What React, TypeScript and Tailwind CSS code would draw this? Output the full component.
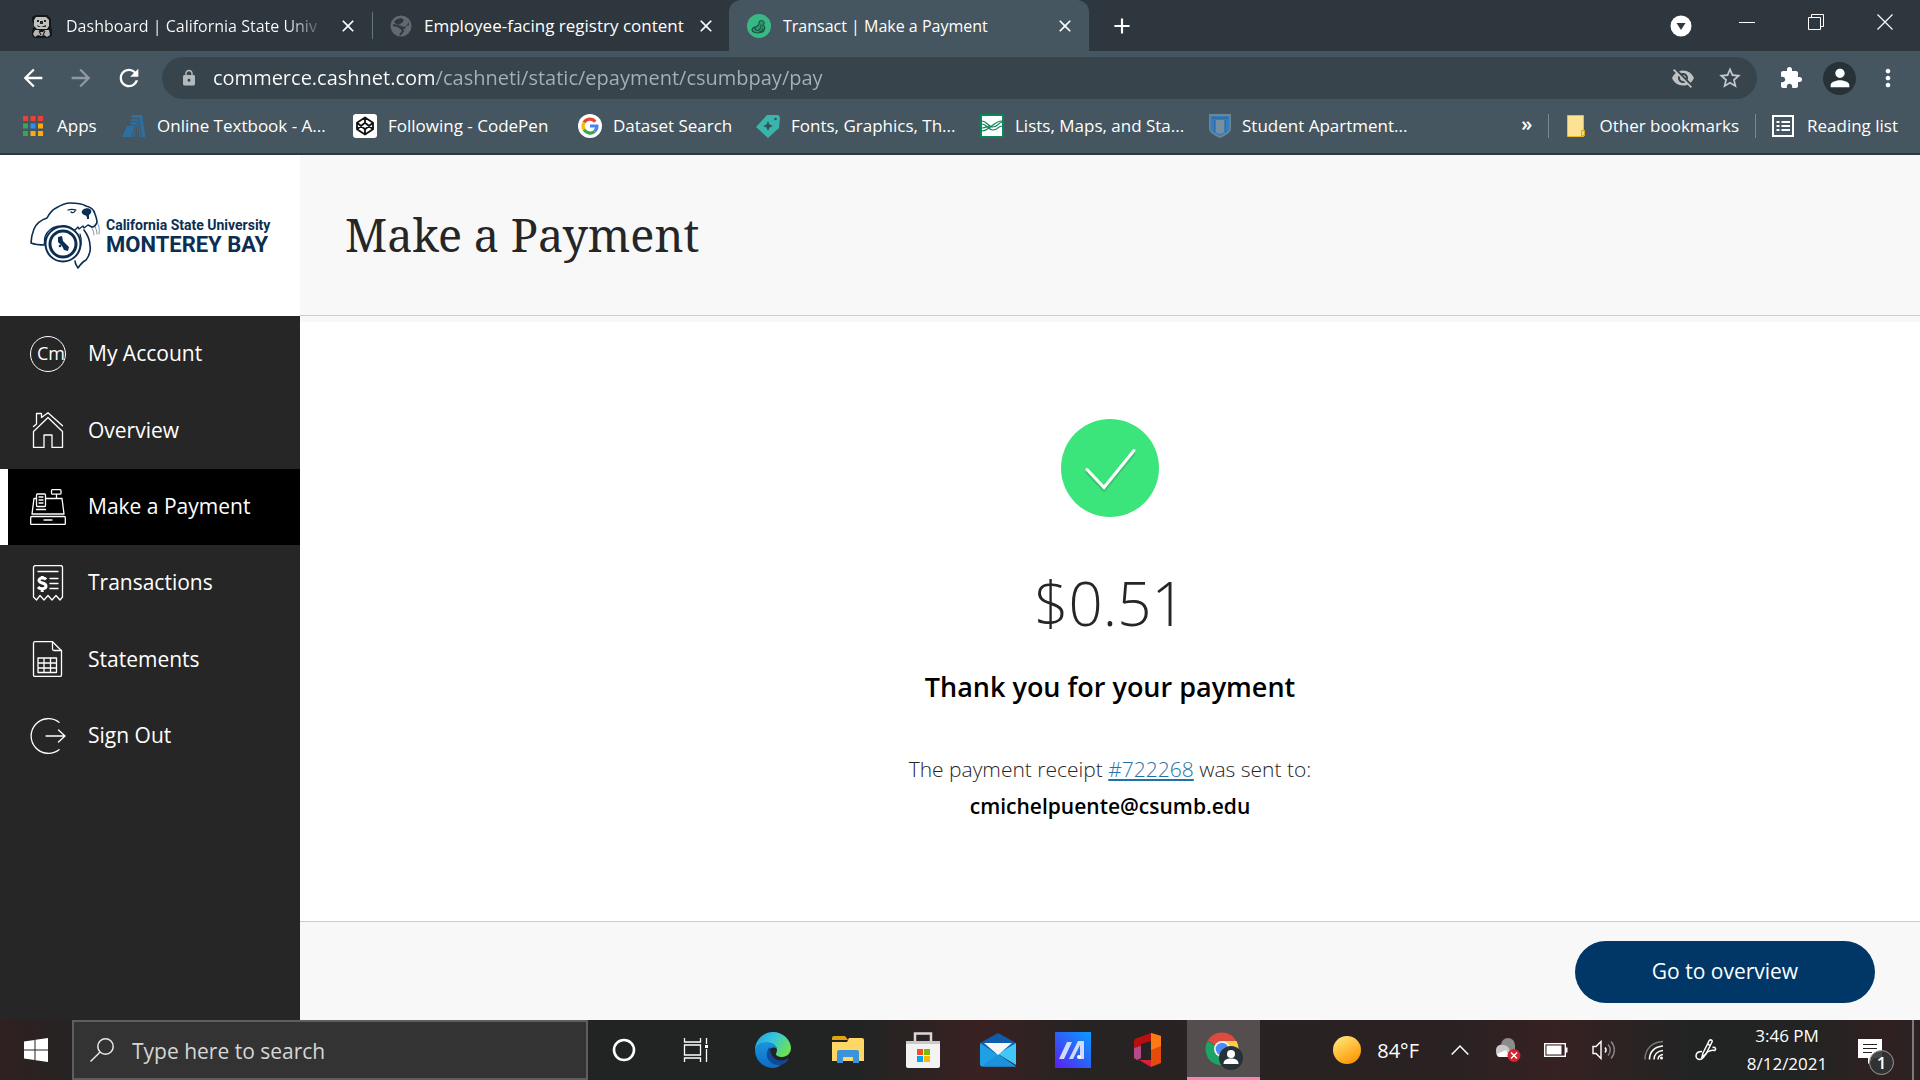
import React from "react";
import type { ReactNode } from "react";
import {
  MdArrowBack,
  MdArrowForward,
  MdRefresh,
  MdLock,
  MdVisibilityOff,
  MdStarBorder,
  MdExtension,
  MdPerson,
  MdMoreVert,
  MdClose,
  MdAdd,
} from "react-icons/md";

/* ---------- Browser icons ---------- */

const OtterFavicon = () => (
  <svg viewBox="0 0 22 24" className="h-6 w-[22px]" aria-hidden="true">
    <path d="M5 1h11l4 4v8l1 3v6l-4 2H3l-2-3v-5l2-3V10L1 7V3z" fill="#15181a" />
    <path d="M5 3h10l3 3v6l-2 3H6l-3-3V6z" fill="#c4c2bf" />
    <path d="M4 16h4l1 2h3l2-2h4l1 5-3 2-3-2-3 1-3-1-3 2-2-3z" fill="#b7b5b2" />
    <path d="M6 6h2v2H6zM13 6h2v2h-2zM9 7h3v3H9zM6 11l4 2 5-2v2H7z" fill="#22262a" />
    <path d="M8 17l2 4M14 17l-2 4" stroke="#22262a" strokeWidth="1.2" />
  </svg>
);

const GlobeFavicon = () => (
  <svg viewBox="0 0 22 22" className="size-[22px]" aria-hidden="true">
    <circle cx="11" cy="11" r="10.5" fill="#63696d" />
    <path d="M12 3c4 0 7 3 7 7l-3 1-1 3-4-1-1-3-4-1-2-2c2-3 5-4 8-4z" fill="#2d373d" />
    <path d="M11 3l3 2-2 3-3 1 2 2 3 1 3-2 2-4-3-3z" fill="#63696d" />
    <path d="M3 10l5 1 4 3 1 2-3 4" fill="none" stroke="#2d373d" strokeWidth="2" />
  </svg>
);

const TransactFavicon = () => (
  <svg viewBox="0 0 24 24" className="size-6" aria-hidden="true">
    <circle cx="12" cy="12" r="12" fill="#38b984" />
    <path
      d="M5 15.500c1-3 4-2 6-4s0-5 3-5 4 3 2 5c3 1 2 6-2 7-4 1-9 0-9-3z"
      fill="#2b9a70"
      stroke="#1d5546"
      strokeWidth="1.200"
    />
    <path d="M7 13.500c3 2 1 3 3 3s4-2 4-6M12 18c2 0 4-2 4-4" fill="none" stroke="#1d5546" strokeWidth="1.200" />
  </svg>
);

const AppsIcon = () => (
  <svg viewBox="0 0 20 20" className="size-5" aria-hidden="true">
    <path d="M0 0h5v5H0zM7.500 0h5v5h-5zM15 0h5v5h-5z" fill="#ea4335" />
    <path d="M0 7.500h5v5H0zM0 15h5v5H0z" fill="#34a853" />
    <path d="M7.500 7.500h5v5h-5z" fill="#2f8df5" />
    <path d="M15 7.500h5v5h-5zM7.500 15h5v5h-5zM15 15h5v5h-5z" fill="#fbab0c" />
  </svg>
);

const TextbookIcon = () => (
  <svg viewBox="0 0 24 24" className="size-6" aria-hidden="true">
    <path d="M10 1h10l3.500 22H0l5-11h3z" fill="#2f6f9d" />
    <path d="M8 4.500h9l2.500 18.500M5 11h8l.5 1L9.500 23M9 7.500h6.500L17 23" fill="none" stroke="#455660" strokeWidth="1.100" />
    <path d="M14.500 11l1.500 12h-4z" fill="#455660" />
  </svg>
);

const CodepenIcon = () => (
  <svg viewBox="0 0 24 24" className="size-6" aria-hidden="true">
    <rect width="24" height="24" rx="3" fill="#fff" />
    <path
      d="M12 3.500l8 5.200v6.600l-8 5.200-8-5.200V8.700zM12 3.500v5.300M12 20.500v-5.300M4 8.700l8 6.500 8-6.500M4 15.300l8-6.500 8 6.500"
      fill="none"
      stroke="#111"
      strokeWidth="1.800"
      strokeLinejoin="round"
    />
  </svg>
);

const GoogleIcon = () => (
  <svg viewBox="0 0 24 24" className="size-6" aria-hidden="true">
    <circle cx="12" cy="12" r="12" fill="#fff" />
    <g fill="none" strokeWidth="3.200">
      <path d="M17.300 7.600A7 7 0 0 0 6 8.500" stroke="#ea4335" />
      <path d="M6 8.500a7 7 0 0 0 0 7" stroke="#fbbc05" />
      <path d="M6 15.500a7 7 0 0 0 10.500 2" stroke="#34a853" />
      <path d="M16.500 17.500a7 7 0 0 0 2.400-5.500H12" stroke="#4285f4" />
    </g>
  </svg>
);

const TagIcon = () => (
  <svg viewBox="0 0 24 24" className="size-6" aria-hidden="true">
    <path d="M11 1l11 0 2 2-1 11-11 10L0 13z" fill="#3ab5ab" />
    <path d="M12 7l1.500 3.500L17 12l-3.500 1.500L12 17l-1.500-3.500L7 12l3.500-1.500z" fill="#34505a" />
    <circle cx="19.500" cy="5" r="1.300" fill="#34505a" />
  </svg>
);

const ListsIcon = () => (
  <svg viewBox="0 0 24 24" className="size-6" aria-hidden="true">
    <rect x="1" y="1" width="22" height="22" fill="#fff" stroke="#0b8457" strokeWidth="2" />
    <path
      d="M2 7c5 0 6 6 11 6s5-4 9-5M2 10c5 0 6 6 11 6s5-4 9-4M2 17c7 0 12-10 20-10M2 14c4 0 5-2 8-2"
      fill="none"
      stroke="#0b8457"
      strokeWidth="1.200"
    />
  </svg>
);

const ShieldIcon = () => (
  <svg viewBox="0 0 22 24" className="h-6 w-[22px]" aria-hidden="true">
    <path d="M0 0h22v14c0 5-5 7-11 10C5 21 0 19 0 14z" fill="#6f8592" />
    <path d="M1.500 2h19v12c0 4-4 5-9.500 8C5.500 19 1.500 18 1.500 14z" fill="#2f7fc7" />
    <path d="M6 6h10v12l-5 2-5-2z" fill="#7390a4" />
    <path d="M3 4h16M6 6v12M16 6v12" stroke="#3d5f7d" strokeWidth="1" />
  </svg>
);

const FolderBookmarkIcon = () => (
  <svg viewBox="0 0 18 22" className="h-[22px] w-[18px]" aria-hidden="true">
    <path d="M.5.500h16v14l1 1v5l-1 1H.5z" fill="#fde293" stroke="#e9bd2c" />
    <path d="M14.500 21v-5.500h3v4.500z" fill="#fbdb74" stroke="#d9a916" />
  </svg>
);

const ReadingListIcon = () => (
  <svg viewBox="0 0 22 22" className="size-[22px]" aria-hidden="true">
    <rect x="1" y="1" width="20" height="20" fill="none" stroke="#fff" strokeWidth="2" />
    <path d="M4.500 7h3M4.500 11h3M4.500 15h3M9.500 7H18M9.500 11H18M9.500 15H18" stroke="#fff" strokeWidth="2" />
  </svg>
);

/* ---------- Site icons ---------- */

const OtterLogo = () => (
  <svg
    viewBox="0 0 72 70"
    className="h-[70px] w-[72px] shrink-0"
    aria-hidden="true"
    fill="none"
    stroke="#0b2e52"
    strokeLinecap="round"
    strokeLinejoin="round"
  >
    <path
      d="M16 44c-5 0-9 0-14-2 0-5 1-9 3-14 2-5 7-9 13-11 2-4 5-8 9-10 5-3 9-5 14-5 6 0 11 0 16 3 5 1 8 4 9 8 1 3 2 5 2 8-1 3-3 5-5 5"
      strokeWidth="1.600"
    />
    <path d="M46 29l3-3 1 2 4-3 1 2 4-3 4 2M16 42c-1-3 0-7 2-10 3-4 8-7 14-7 5-1 9 1 13 4" strokeWidth="1.400" />
    <path d="M55 29c3 4 6 9 6 16 1 5-1 10-4 14-4 2-6 5-8 8-1-2-3-4-3-7" strokeWidth="1.600" />
    <path d="M51 33c2 6 2 12-2 18M17 37l-2 6" strokeWidth="1.200" />
    <circle cx="34" cy="43" r="17.500" strokeWidth="2" fill="#fff" />
    <circle cx="34" cy="43" r="13" strokeWidth="3" />
    <path d="M29 36l4-1 1 5 6 6-1 4-4-1-2-4-4-4z" fill="#0b2e52" stroke="none" />
    <circle cx="31" cy="45" r="1.300" fill="#0b2e52" stroke="none" />
    <path d="M53 10c1-3 7-4 9-1 1 3-1 4-2 5v4h-2c0-3-1-4-3-4-2-1-3-3-2-4z" fill="#0b2e52" stroke="none" />
    <path d="M39 9c3-1 5-1 8 0M42 11c1 1 3 1 4-1" strokeWidth="1.300" />
    <path d="M68 21c2 4 3 7 2 12M65 24c2 3 3 6 3 9M63 27c1 2 2 5 2 7" strokeWidth="0.500" />
  </svg>
);

const line = { fill: "none", stroke: "#fff", strokeWidth: 1.3, strokeLinejoin: "round", strokeLinecap: "round" } as const;

const AccountIcon = () => (
  <span className="flex size-9 items-center justify-end overflow-hidden rounded-full border border-white pb-0.5 text-lg leading-none">
    Cm
  </span>
);

const HouseIcon = () => (
  <svg viewBox="0 0 36 36" className="size-9" aria-hidden="true" {...line}>
    <path d="M3.500 14.500l3-2.500V1.500h5v4L18 .7l14.500 13" />
    <path d="M3.500 19.500v16h10.500V23h8v12.500h10.500v-16L18 5.500z" />
  </svg>
);

const RegisterIcon = () => (
  <svg viewBox="0 0 36 36" className="size-9" aria-hidden="true" {...line}>
    <rect x="0.700" y="27.500" width="34.600" height="8" rx="1" />
    <path d="M14 31h8M6.500 9.500H4L2 25h32L32 9.500H15.500M26.500 5.500v4" />
    <rect x="21.500" y="0.700" width="9.500" height="4.500" rx="1" />
    <rect x="6.500" y="5" width="9" height="12.500" rx="1" />
    <path d="M9 8h4M9 11h4M9 14h4M6.500 20.500h9" />
  </svg>
);

const ReceiptIcon = () => (
  <svg viewBox="0 0 36 36" className="size-9" aria-hidden="true" {...line}>
    <path d="M3.500 32V2.500a2 2 0 0 1 2-2h25a2 2 0 0 1 2 2V32l-2.500 3-4-4.500-4 4.500-4-4.500-4 4.500-4-4.500L6.500 35z" />
    <path d="M8 6.500h20M20 13.500h8M20 18.500h8M20 23.500h8" />
    <path d="M16 14.500c-1.500-2-7-2-7 1s7 2 7 5.500-6 3.500-8 1M12.200 11v3M12.200 24v3" strokeWidth="3" strokeLinecap="butt" />
  </svg>
);

const StatementIcon = () => (
  <svg viewBox="0 0 36 36" className="size-9" aria-hidden="true" {...line}>
    <path d="M5 .7h17.500l9 9V34a1.500 1.500 0 0 1-1.500 1.500H5A1.500 1.500 0 0 1 3.500 34V2A1.500 1.500 0 0 1 5 .7z" />
    <path d="M22.500.7V8a1.500 1.500 0 0 0 1.500 1.500h7.500" />
    <path d="M8 17h18.500v14.500H8zM8 22h18.500M8 27h18.500M14 17v14.500M20.500 17v14.500" />
  </svg>
);

const SignOutIcon = () => (
  <svg viewBox="0 0 36 36" className="size-9" aria-hidden="true" {...line}>
    <path d="M29 4.300A17.300 17.300 0 1 0 29 31.700M16 18h19M28.500 12l6.500 6-6.500 6" />
  </svg>
);

const SuccessIcon = () => (
  <svg viewBox="0 0 98 98" className="size-[98px]" role="img" aria-label="Payment successful">
    <circle cx="49" cy="49" r="49" fill="#3ce57b" />
    <g fill="none" strokeLinecap="round" strokeWidth="3">
      <path d="M26 53.500l17 18 30-37" stroke="#3bc46d" />
      <path d="M26 50.500l17 18 30-37" stroke="#fff" />
    </g>
  </svg>
);

/* ---------- Taskbar icons ---------- */

const WindowsIcon = () => (
  <svg viewBox="0 0 24 24" className="size-6" aria-hidden="true" fill="#fff">
    <path d="M0 3.400L10.500 2v9.500H0zM11.500 1.800L24 0v11.500H11.500zM0 12.500h10.500V22L0 20.600zM11.500 12.500H24V24l-12.500-1.800z" />
  </svg>
);

const SearchIcon = () => (
  <svg viewBox="0 0 24 24" className="size-6" aria-hidden="true" fill="none" stroke="#e8e8e8" strokeWidth="1.500">
    <circle cx="15.500" cy="8.500" r="7.700" />
    <path d="M10.200 14L.5 23.500" />
  </svg>
);

const CortanaIcon = () => (
  <svg viewBox="0 0 24 24" className="size-6" aria-hidden="true">
    <circle cx="12" cy="12" r="10" fill="none" stroke="#fff" strokeWidth="2.600" />
  </svg>
);

const TaskViewIcon = () => (
  <svg viewBox="0 0 26 24" className="h-6 w-[26px]" aria-hidden="true" fill="none" stroke="#fff" strokeWidth="1.300">
    <path d="M1.500 0v4h16V0M1.500 24v-4h16v4M1.500 7h16v10h-16zM23.500 0v6M23.500 11v13" />
    <path d="M22 7h3v3h-3z" fill="#fff" stroke="none" />
  </svg>
);

const EdgeIcon = () => (
  <svg viewBox="0 0 36 36" className="size-9" aria-hidden="true">
    <defs>
      <linearGradient id="edgeTop" x1="0" y1="0" x2="1" y2="0.500">
        <stop offset="0" stopColor="#1e9fdc" />
        <stop offset="0.500" stopColor="#35c5e0" />
        <stop offset="1" stopColor="#6be05a" />
      </linearGradient>
      <linearGradient id="edgeBody" x1="0" y1="0" x2="0" y2="1">
        <stop offset="0" stopColor="#1a94dc" />
        <stop offset="1" stopColor="#0c6cc4" />
      </linearGradient>
    </defs>
    <path d="M0 18C0 8 8 0 18 0s18 8 18 16c0 5-4 9-9 9-3 0-6-1-6-3 0-1 1-2 1-4 0-4-4-7-9-7C7 11 2 13 0 18z" fill="url(#edgeTop)" />
    <path d="M0 18c1-6 6-8 12-8 5 0 9 3 10 7-2-3-9-2-9 5 0 6 6 11 13 11-3 2-5 3-8 3C8 36 0 28 0 18z" fill="url(#edgeBody)" />
    <path d="M15 15c-7 7-2 18 9 18 4 0 7-2 9-5 1-1 0-2-1-1-8 4-17 0-17-12z" fill="#11499a" />
  </svg>
);

const ExplorerIcon = () => (
  <svg viewBox="0 0 32 28" className="h-7 w-8" aria-hidden="true">
    <path d="M0 2a2 2 0 0 1 2-2h11l3 4H0z" fill="#e2a214" />
    <path d="M0 6h15l2-4h13a2 2 0 0 1 2 2v21H0z" fill="#ffd766" />
    <path d="M5 27V16a2 2 0 0 1 2-2h18a2 2 0 0 1 2 2v11h-6v-6H11v6z" fill="#3a94dc" />
  </svg>
);

const StoreIcon = () => (
  <svg viewBox="0 0 34 36" className="h-9 w-[34px]" aria-hidden="true">
    <path d="M9 11V1.500h16V11" fill="none" stroke="#d9d9d9" strokeWidth="2.500" />
    <path d="M0 9h34v25a2 2 0 0 1-2 2H2a2 2 0 0 1-2-2z" fill="#f3f3f3" />
    <path d="M0 9h34v3H0z" fill="#c9c9c9" />
    <path d="M11 17h6v6h-6z" fill="#f25022" />
    <path d="M18 17h6v6h-6z" fill="#7fba00" />
    <path d="M11 24h6v6h-6z" fill="#00a4ef" />
    <path d="M18 24h6v6h-6z" fill="#ffb900" />
  </svg>
);

const MailIcon = () => (
  <svg viewBox="0 0 36 34" className="h-[34px] w-9" aria-hidden="true">
    <path d="M0 10L18 0l18 10-9 8H9z" fill="#0f5cab" />
    <path d="M0 10l36 23.500H2a2 2 0 0 1-2-2z" fill="#1fa0e4" />
    <path d="M36 10v22L18 21z" fill="#3fc8f8" />
    <path d="M18 21l18 12.500H2z" fill="#1b92dc" />
    <path d="M4 10h28L18 22z" fill="#f6f6f6" />
  </svg>
);

const MyAsusIcon = () => (
  <svg viewBox="0 0 36 36" className="size-9" aria-hidden="true">
    <defs>
      <linearGradient id="asusBg" x1="0" y1="1" x2="1" y2="0">
        <stop offset="0" stopColor="#5b1ff2" />
        <stop offset="0.500" stopColor="#2d60f6" />
        <stop offset="1" stopColor="#0a9bff" />
      </linearGradient>
    </defs>
    <path d="M0 0h36v36H0z" fill="url(#asusBg)" />
    <path d="M4 27l8-17h5L9 27z" fill="#cfdcff" />
    <path d="M14 27l9-18h6v18h-4V13l-7 14z" fill="#cfdcff" />
    <circle cx="24" cy="25" r="2" fill="#fff" />
  </svg>
);

const OfficeIcon = () => (
  <svg viewBox="0 0 28 34" className="h-[34px] w-7" aria-hidden="true">
    <path d="M0 9a4 4 0 0 1 3-4L17 0v8L7 11v14l-4 2-3-2z" fill="#b8100f" />
    <path d="M0 15l7-2v12l-4 2-3-2z" fill="#b24a8c" />
    <path d="M17 0l10 3v27l-10 4z" fill="#e64a0c" />
    <path d="M17 0l10 3v10l-10 4z" fill="#fb7a14" />
    <path d="M5 27h12v7z" fill="#d81f3c" />
  </svg>
);

const ChromeIcon = () => (
  <svg viewBox="0 0 38 38" className="size-[38px]" aria-hidden="true">
    <path d="M17 17L2.700 8.600A16.500 16.500 0 0 1 31.300 9z" fill="#dd4b3e" />
    <path d="M17 17L2.500 9A16.500 16.500 0 0 0 17 33.500l6-11z" fill="#1ea362" />
    <path d="M17 9h14.500A16.500 16.500 0 0 1 17 33.500l7-13z" fill="#ffce44" />
    <circle cx="17" cy="17" r="8" fill="#f1f1f1" />
    <circle cx="17" cy="17" r="6.300" fill="#4c8bf5" />
    <circle cx="26" cy="26" r="12" fill="#263238" />
    <circle cx="26" cy="22" r="4" fill="#fff" />
    <path d="M18.500 32c0-4 3-5.500 7.500-5.500s7.500 1.500 7.500 5.500z" fill="#fff" />
  </svg>
);

const SunIcon = () => (
  <svg viewBox="0 0 28 28" className="size-7" aria-hidden="true">
    <defs>
      <linearGradient id="sun" x1="0.200" y1="0.100" x2="0.700" y2="1">
        <stop offset="0" stopColor="#ffe070" />
        <stop offset="1" stopColor="#ff9500" />
      </linearGradient>
    </defs>
    <circle cx="14" cy="14" r="14" fill="url(#sun)" />
  </svg>
);

const ChevronUpIcon = () => (
  <svg viewBox="0 0 18 12" className="h-3 w-[18px]" aria-hidden="true">
    <path d="M.7 10.500L9 2l8.300 8.500" fill="none" stroke="#fff" strokeWidth="1.500" />
  </svg>
);

const CloudErrorIcon = () => (
  <svg viewBox="0 0 25 26" className="h-[26px] w-[25px]" aria-hidden="true">
    <path d="M5 8a7 7 0 0 1 14 0v6H5z" fill="#8d8b8b" />
    <path d="M0 14c0-5 3-7 7-6 5 0 7 4 7 8l-2 4H3c-2 0-3-3-3-6z" fill="#c9c8c8" />
    <path d="M1 17l9-4 3 7H3z" fill="#fff" />
    <circle cx="18" cy="18.500" r="6.500" fill="#d8232e" />
    <path d="M15 15.500l6 6M21 15.500l-6 6" stroke="#fff" strokeWidth="1.500" />
  </svg>
);

const BatteryIcon = () => (
  <svg viewBox="0 0 24 14" className="h-3.5 w-6" aria-hidden="true">
    <rect x="0.700" y="0.700" width="20.600" height="12.600" fill="none" stroke="#fff" strokeWidth="1.400" />
    <path d="M2.500 2.500h15v9h-15zM22 4.500h1.500v5H22z" fill="#fff" />
  </svg>
);

const SpeakerIcon = () => (
  <svg viewBox="0 0 24 20" className="h-5 w-6" aria-hidden="true" fill="none" strokeWidth="1.400">
    <path d="M1 6.500h3L9 1.500v17l-5-5H1z" stroke="#fff" />
    <path d="M13 7.500c1.300 1.500 1.300 3.500 0 5" stroke="#fff" />
    <path d="M16 4.500c3 3 3 8 0 11M19 1.500c4.500 5 4.500 12 0 17" stroke="#888" />
  </svg>
);

const WifiIcon = () => (
  <svg viewBox="0 0 20 20" className="size-5" aria-hidden="true" fill="none" strokeWidth="1.500">
    <path d="M1 19.500C1 9 8 2 19 1.500" stroke="#777" />
    <path d="M5.500 19.500C5.500 12 10.500 6.500 19 6M10 19.500c0-5 3.500-8.500 9-9" stroke="#fff" />
    <path d="M14 19.500c0-2.500 2-4.500 5-5" stroke="#fff" />
    <circle cx="17.500" cy="18" r="1.500" fill="#fff" />
  </svg>
);

const PenIcon = () => (
  <svg viewBox="0 0 22 22" className="size-[22px]" aria-hidden="true" fill="none" stroke="#fff" strokeWidth="1.500">
    <path d="M8 14L14 2c1-2 4-1 3 1l-6 12-4 3zM12.500 5l3 1.500" />
    <path d="M7 12.500c-4 0-6 2-6 4.500 0 3 3 4 5.500 3 3-1 3-5 6-7s5-2 7-1.500c2-1 1-4-2-3" />
  </svg>
);

const NotificationIcon = () => (
  <svg viewBox="0 0 24 26" className="h-[26px] w-6" aria-hidden="true">
    <path d="M0 0h24v19h-8l-6 6v-6H0z" fill="#fff" />
    <path d="M5 5.500h14M5 9.500h14M5 13.500h9" stroke="#222" strokeWidth="1.200" />
  </svg>
);

/* ---------- Browser chrome ---------- */

function TabStrip() {
  return (
    <div className="flex h-[51px] shrink-0 bg-[#2d373d] text-white">
      <div className="flex h-full w-[372px] items-center pl-[31px]">
        <OtterFavicon />
        <button className="ml-[13px] whitespace-nowrap bg-[linear-gradient(to_right,white_88%,#5b656b)] bg-clip-text text-left text-base text-transparent">
          Dashboard | California State Univ
        </button>
        <button aria-label="Close tab" className="ml-auto mr-[14px] flex size-5 items-center justify-center">
          <MdClose className="size-5 shrink-0" />
        </button>
      </div>
      <div className="my-3 w-px shrink-0 bg-[#68737a]" />
      <div className="flex h-full w-[356px] items-center pl-[17px] pr-3">
        <GlobeFavicon />
        <button className="ml-3 w-[268px] overflow-hidden whitespace-nowrap text-left text-[17px]">
          Employee-facing registry content
        </button>
        <button aria-label="Close tab" className="ml-1 flex size-5 items-center justify-center">
          <MdClose className="size-5 shrink-0" />
        </button>
      </div>
      <div className="flex h-full w-[360px] items-center rounded-t-xl bg-[#455660] pl-[18px] pr-[14px]">
        <TransactFavicon />
        <button aria-current="page" className="ml-3 flex-1 whitespace-nowrap text-left text-base">
          Transact | Make a Payment
        </button>
        <button aria-label="Close tab" className="flex size-5 items-center justify-center">
          <MdClose className="size-5 shrink-0" />
        </button>
      </div>
      <button aria-label="New tab" className="ml-5 flex items-center">
        <MdAdd className="size-[26px]" />
      </button>
      <div className="ml-auto flex items-center pr-[27px]">
        <button aria-label="Search tabs" className="mr-[47px]">
          <svg viewBox="0 0 22 22" className="size-[22px]" aria-hidden="true">
            <circle cx="11" cy="11" r="10.500" fill="#fff" />
            <path d="M6.500 8h9L11 15z" fill="#2d373d" />
          </svg>
        </button>
        <button aria-label="Minimize" className="mr-[53px] pb-2">
          <svg viewBox="0 0 16 16" className="size-4" aria-hidden="true">
            <path d="M0 8.500h16" stroke="#fff" />
          </svg>
        </button>
        <button aria-label="Restore" className="mr-[53px] pb-2">
          <svg viewBox="0 0 16 16" className="size-4" aria-hidden="true" fill="none" stroke="#fff">
            <path d="M.5 3.500h12v12H.5zM3.500 3.500v-3h12v12h-3" />
          </svg>
        </button>
        <button aria-label="Close" className="pb-2">
          <svg viewBox="0 0 16 16" className="size-4" aria-hidden="true" fill="none" stroke="#fff" strokeWidth="1.200">
            <path d="M.5.500l15 15M15.500.500l-15 15" />
          </svg>
        </button>
      </div>
    </div>
  );
}

function AddressRow() {
  return (
    <div className="flex h-[54px] items-center pr-[18px] text-white">
      <div className="flex w-[162px] shrink-0 items-center gap-5 pl-[19px]">
        <button aria-label="Back"><MdArrowBack className="size-7" /></button>
        <button aria-label="Forward"><MdArrowForward className="size-7 text-[#8f999f]" /></button>
        <button aria-label="Reload"><MdRefresh className="size-7" /></button>
      </div>
      <div className="flex h-[42px] flex-1 items-center rounded-full bg-[#38444b] pl-[18px] pr-[14px]">
        <MdLock className="size-[18px] shrink-0 text-[#b4b9bc]" />
        <input
          aria-label="Address"
          defaultValue="commerce.cashnet.com/cashneti/static/epayment/csumbpay/pay"
          className="ml-[15px] min-w-0 flex-1 bg-[linear-gradient(to_right,#ffffff_221px,#a9b0b4_221px)] bg-clip-text text-xl text-transparent outline-none"
        />
        <button aria-label="Cookies blocked" className="mr-[22px]"><MdVisibilityOff className="size-6 text-[#bfc1c2]" /></button>
        <button aria-label="Bookmark this page"><MdStarBorder className="size-[26px] text-[#c6c7c8]" /></button>
      </div>
      <div className="flex items-center pl-[22px]">
        <button aria-label="Extensions"><MdExtension className="size-6" /></button>
        <button aria-label="Profile" className="ml-5 flex size-[33px] items-center justify-center rounded-full bg-[#263238]">
          <MdPerson className="size-7" />
        </button>
        <button aria-label="Menu" className="ml-[18px]"><MdMoreVert className="size-7" /></button>
      </div>
    </div>
  );
}

const bookmarks: { label: string; icon: ReactNode; cls: string }[] = [
  { label: "Apps", icon: <AppsIcon />, cls: "w-[99px] gap-[14px]" },
  { label: "Online Textbook - A...", icon: <TextbookIcon />, cls: "w-[231px] gap-[11px]" },
  { label: "Following - CodePen", icon: <CodepenIcon />, cls: "w-[225px] gap-[11px]" },
  { label: "Dataset Search", icon: <GoogleIcon />, cls: "w-[178px] gap-[11px]" },
  { label: "Fonts, Graphics, Th...", icon: <TagIcon />, cls: "w-[224px] gap-[11px]" },
  { label: "Lists, Maps, and Sta...", icon: <ListsIcon />, cls: "w-[229px] gap-[11px]" },
  { label: "Student Apartment...", icon: <ShieldIcon />, cls: "gap-[11px]" },
];

function BookmarksBar() {
  return (
    <nav aria-label="Bookmarks" className="flex h-12 items-center whitespace-nowrap pb-1.5 pl-[23px] pr-[22px] text-[17px] text-white">
      {bookmarks.map((b) => (
        <a key={b.label} href="#" className={"flex shrink-0 items-center " + b.cls}>
          {b.icon}
          <span>{b.label}</span>
        </a>
      ))}
      <button aria-label="More bookmarks" className="ml-auto pb-1 text-xl font-semibold">»</button>
      <div className="ml-4 h-6 w-px bg-[#7c888f]" />
      <a href="#" className="ml-[18px] flex items-center gap-[14px]">
        <FolderBookmarkIcon />
        Other bookmarks
      </a>
      <div className="ml-4 h-6 w-px bg-[#7c888f]" />
      <button className="ml-4 flex items-center gap-[13px]">
        <ReadingListIcon />
        Reading list
      </button>
    </nav>
  );
}

/* ---------- Payment site ---------- */

const menu: { label: string; icon: ReactNode; active?: boolean }[] = [
  { label: "My Account", icon: <AccountIcon /> },
  { label: "Overview", icon: <HouseIcon /> },
  { label: "Make a Payment", icon: <RegisterIcon />, active: true },
  { label: "Transactions", icon: <ReceiptIcon /> },
  { label: "Statements", icon: <StatementIcon /> },
  { label: "Sign Out", icon: <SignOutIcon /> },
];

function Sidebar() {
  return (
    <aside className="flex w-[300px] shrink-0 flex-col bg-[#262626]">
      <div className="flex h-[161px] items-center gap-[5px] bg-white pl-[29px] font-['Roboto'] text-[#0b2e52]">
        <OtterLogo />
        <div className="whitespace-nowrap">
          <div className="text-[14px] font-bold leading-[18px]">California State University</div>
          <div className="text-[22px] font-bold leading-[22px]">MONTEREY BAY</div>
        </div>
      </div>
      <nav aria-label="Main" className="grid h-[458px] grid-rows-6 text-[21px] text-white">
        {menu.map((m) => (
          <a
            key={m.label}
            href="#"
            className={
              m.active
                ? "flex items-center gap-[22px] border-l-8 border-white bg-black pl-[22px]"
                : "flex items-center gap-[22px] pl-[30px]"
            }
          >
            {m.icon}
            <span>{m.label}</span>
          </a>
        ))}
      </nav>
    </aside>
  );
}

function PaymentPage() {
  return (
    <main className="flex min-w-0 flex-1 flex-col bg-white">
      <header className="flex h-[161px] shrink-0 items-center border-b border-[#cccccc] bg-[#f8f8f8] pl-[45px]">
        <h1 className="font-['Noto_Serif','DejaVu_Serif',serif] text-[45px] text-[#262626]">Make a Payment</h1>
      </header>
      <div className="h-1.5 shrink-0 bg-[#f8f8f8]" />
      <section className="flex flex-1 flex-col items-center pt-[97px]">
        <SuccessIcon />
        <p className="mt-[46px] text-[60px] font-light leading-[80px] text-[#262626]">$0.51</p>
        <h2 className="mt-6 text-[27px] font-semibold leading-10 text-black">Thank you for your payment</h2>
        <p className="mt-11 text-[21px] font-[350] leading-[37px] text-[#262626]">
          The payment receipt{" "}
          <a href="#" className="text-[#1f73a8] underline decoration-2 underline-offset-2">#722268</a> was sent to:
        </p>
        <p className="text-[21px] font-semibold leading-[37px] text-black">cmichelpuente@csumb.edu</p>
      </section>
      <footer className="flex h-[99px] shrink-0 items-start justify-end border-t border-[#cccccc] bg-[#f8f8f8] pr-[45px] pt-[19px]">
        <button className="h-[62px] w-[300px] rounded-full bg-[#003767] text-[21px] text-white">Go to overview</button>
      </footer>
    </main>
  );
}

/* ---------- Taskbar ---------- */

const pinned: { label: string; icon: ReactNode }[] = [
  { label: "Microsoft Edge", icon: <EdgeIcon /> },
  { label: "File Explorer", icon: <ExplorerIcon /> },
  { label: "Microsoft Store", icon: <StoreIcon /> },
  { label: "Mail", icon: <MailIcon /> },
  { label: "MyASUS", icon: <MyAsusIcon /> },
  { label: "Office", icon: <OfficeIcon /> },
];

const tray: { label: string; icon: ReactNode; width: string }[] = [
  { label: "Show hidden icons", icon: <ChevronUpIcon />, width: "w-[46px]" },
  { label: "OneDrive", icon: <CloudErrorIcon />, width: "w-[50px]" },
  { label: "Battery", icon: <BatteryIcon />, width: "w-[46px]" },
  { label: "Volume", icon: <SpeakerIcon />, width: "w-[50px]" },
  { label: "Network", icon: <WifiIcon />, width: "w-[50px]" },
  { label: "Windows Ink", icon: <PenIcon />, width: "w-[54px]" },
];

function Taskbar() {
  return (
    <footer className="flex h-[60px] shrink-0 bg-[linear-gradient(to_right,#302021_0%,#222423_5%,#222423_45%,#3a2122_51%,#272323_56%,#2a2222_70%,#2a2222_76%,#372122_81%,#222423_88%,#222423_94%,#302021_98%,#2a2222_100%)] text-white">
      <button aria-label="Start" className="flex w-[72px] items-center justify-center">
        <WindowsIcon />
      </button>
      <label className="flex w-[516px] items-center border-2 border-[#5e5e5e] bg-[#333333] pl-4">
        <SearchIcon />
        <input
          type="text"
          aria-label="Search"
          placeholder="Type here to search"
          className="ml-[18px] min-w-0 flex-1 bg-transparent pt-1 text-[21px] outline-none placeholder:text-[#d6d6d6]"
        />
      </label>
      <button aria-label="Cortana" className="flex w-[72px] items-center justify-center"><CortanaIcon /></button>
      <button aria-label="Task View" className="flex w-[75px] items-center justify-center pr-1"><TaskViewIcon /></button>
      {pinned.map((p) => (
        <button key={p.label} aria-label={p.label} className="flex w-[75px] items-center justify-center">
          {p.icon}
        </button>
      ))}
      <button aria-label="Google Chrome" className="ml-0.5 flex w-[73px] items-center justify-center border-b-[3px] border-[#ff80b4] bg-[#544e4f] pt-1">
        <ChromeIcon />
      </button>
      <div className="ml-auto flex">
        <button className="flex items-center pr-[18px] text-xl">
          <SunIcon />
          <span className="ml-4 pt-0.5">84°F</span>
        </button>
        {tray.map((t) => (
          <button key={t.label} aria-label={t.label} className={"flex items-center justify-center " + t.width}>
            {t.icon}
          </button>
        ))}
        <button className="w-[108px] whitespace-nowrap text-center text-[17px] leading-7">
          <span className="block">3:46 PM</span>
          <span className="block">8/12/2021</span>
        </button>
        <button aria-label="Notifications" className="flex w-[71px] items-center pl-[17px] pt-1">
          <span className="relative">
            <NotificationIcon />
            <span className="absolute left-[11px] top-[11px] flex size-[25px] items-center justify-center rounded-full border border-[#9a9a9a] bg-[#333333]/90 text-[17px] font-semibold leading-none">
              1
            </span>
          </span>
        </button>
        <div className="w-2 border-l-2 border-[#7d7879]" />
      </div>
    </footer>
  );
}

export default function App() {
  return (
    <div className="flex h-screen flex-col overflow-hidden font-['Open_Sans','Noto_Sans',sans-serif]">
      <TabStrip />
      <div className="shrink-0 border-b-2 border-[#2d373d] bg-[#455660]">
        <AddressRow />
        <BookmarksBar />
      </div>
      <div className="flex min-h-0 flex-1">
        <Sidebar />
        <PaymentPage />
      </div>
      <Taskbar />
    </div>
  );
}
